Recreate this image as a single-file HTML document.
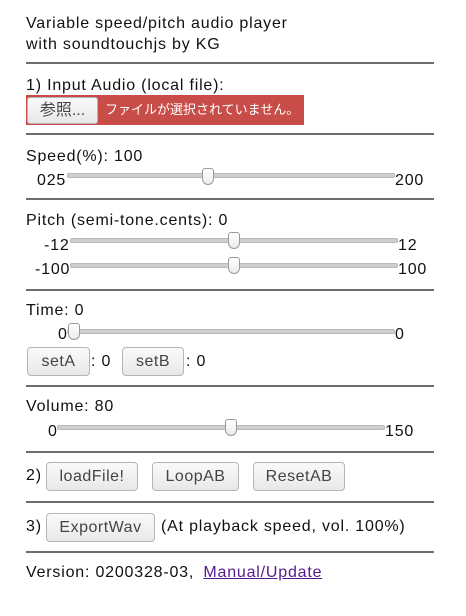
<!DOCTYPE html>
<html><head><meta charset="utf-8"><style>
body{margin:0;width:466px;height:616px;background:#fff;font-family:"Liberation Sans","Noto Sans CJK JP",sans-serif;font-size:16px;letter-spacing:0.8px;color:#111;position:relative;overflow:hidden}
.a{position:absolute;white-space:nowrap;line-height:20px}
.hr{position:absolute;left:26px;width:408px;height:2px;background:#6e6e6e}
.tr{position:absolute;height:3px;background:#cfcfcf;border:1px solid #b8b8b8;border-radius:2px}
.th{position:absolute;width:10px;height:15px;background:linear-gradient(#fff,#ececec);border:1px solid #9a9a9a;border-radius:3px 3px 6px 6px}
.b{position:absolute;height:26px;border:1px solid #b5b5b5;border-radius:4px;background:linear-gradient(#fafafa,#e8e8e8);color:#444;font-size:16px;text-align:center;line-height:26px;box-sizing:border-box;letter-spacing:0.5px}
</style></head><body>
<div class="a" style="left:26px;top:14px">Variable speed/pitch audio player</div>
<div class="a" style="left:26px;top:35px">with soundtouchjs by KG</div>
<div class="hr" style="top:62px"></div>
<div class="a" style="left:26px;top:76px">1) Input Audio (local file):</div>
<div style="position:absolute;left:26px;top:95px;width:278px;height:30px;background:#c84c47"></div>
<div class="b" style="left:27px;top:97px;width:71px;height:27px;line-height:26px;border-radius:3px;letter-spacing:0">参照...</div>
<div class="a" style="left:105px;top:100px;color:#fff;font-size:13px;letter-spacing:0">ファイルが選択されていません。</div>
<div class="hr" style="top:133px"></div>
<div class="a" style="left:26px;top:147px">Speed(%): 100</div>
<div class="a" style="left:37px;top:171px">025</div>
<div class="tr" style="left:67px;top:173px;width:326px"></div>
<div class="th" style="left:202px;top:168px"></div>
<div class="a" style="left:395px;top:171px">200</div>
<div class="hr" style="top:198px"></div>
<div class="a" style="left:26px;top:211px">Pitch (semi-tone.cents): 0</div>
<div class="a" style="left:44px;top:236px">-12</div>
<div class="tr" style="left:70px;top:238px;width:326px"></div>
<div class="th" style="left:228px;top:232px"></div>
<div class="a" style="left:398px;top:236px">12</div>
<div class="a" style="left:35px;top:260px">-100</div>
<div class="tr" style="left:70px;top:263px;width:326px"></div>
<div class="th" style="left:228px;top:257px"></div>
<div class="a" style="left:398px;top:260px">100</div>
<div class="hr" style="top:289px"></div>
<div class="a" style="left:26px;top:301px">Time: 0</div>
<div class="a" style="left:58px;top:325px">0</div>
<div class="tr" style="left:67px;top:329px;width:326px"></div>
<div class="th" style="left:68px;top:323px"></div>
<div class="a" style="left:395px;top:325px">0</div>
<div class="b" style="left:27px;top:347px;width:63px;height:29px;line-height:28px">setA</div>
<div class="a" style="left:91px;top:352px">: 0</div>
<div class="b" style="left:122px;top:347px;width:62px;height:29px;line-height:28px">setB</div>
<div class="a" style="left:186px;top:352px">: 0</div>
<div class="hr" style="top:385px"></div>
<div class="a" style="left:26px;top:397px">Volume: 80</div>
<div class="a" style="left:48px;top:422px">0</div>
<div class="tr" style="left:57px;top:425px;width:326px"></div>
<div class="th" style="left:225px;top:419px"></div>
<div class="a" style="left:385px;top:422px">150</div>
<div class="hr" style="top:451px"></div>
<div class="a" style="left:26px;top:466px">2)</div>
<div class="b" style="left:46px;top:462px;width:92px;height:29px;line-height:28px">loadFile!</div>
<div class="b" style="left:152px;top:462px;width:87px;height:29px;line-height:28px">LoopAB</div>
<div class="b" style="left:253px;top:462px;width:92px;height:29px;line-height:28px">ResetAB</div>
<div class="hr" style="top:501px"></div>
<div class="a" style="left:26px;top:517px">3)</div>
<div class="b" style="left:46px;top:513px;width:109px;height:29px;line-height:28px">ExportWav</div>
<div class="a" style="left:161px;top:517px">(At playback speed, vol. 100%)</div>
<div class="hr" style="top:551px"></div>
<div class="a" style="left:26px;top:563px">Version: 0200328-03, <span style="margin-left:4px;color:#551a8b;text-decoration:underline">Manual/Update</span></div>
</body></html>
